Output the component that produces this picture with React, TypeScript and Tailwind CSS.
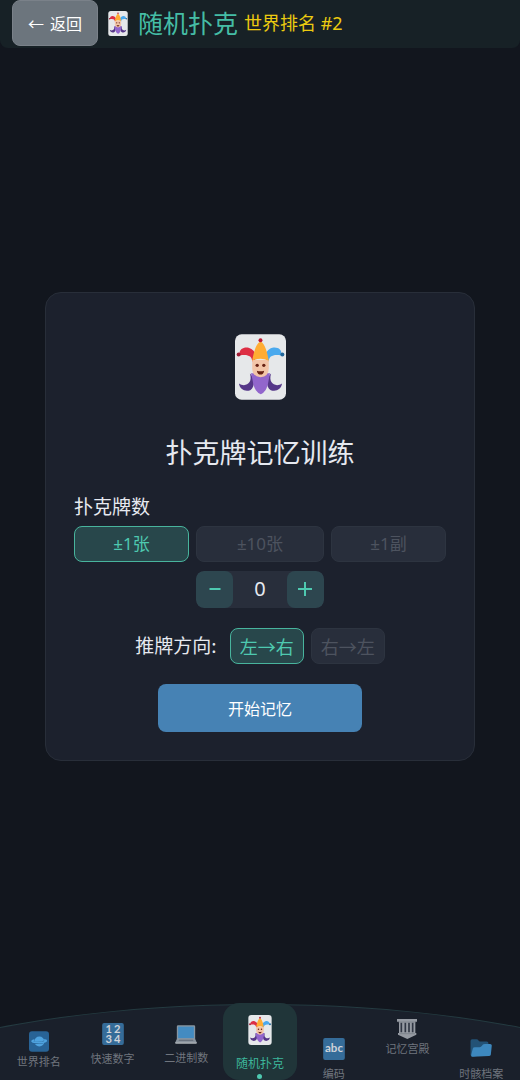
import React, { useState } from "react";

function Joker({ className }: { className: string }) {
  return (
    <svg viewBox="73 42 154 198" className={className} aria-hidden="true">
      <rect x="73" y="42" width="154" height="198" rx="20" fill="#e6e8ea" />
      <path d="M125 126C125 106 110 102 87 106C84 88 98 80 114 83C128 87 136 98 137 114Z" fill="#dd2e44" />
      <path d="M175 126C175 106 190 102 213 106C216 88 202 80 186 83C172 87 164 98 163 114Z" fill="#4aa9ee" />
      <circle cx="84" cy="103" r="6" fill="#a01c35" />
      <circle cx="216" cy="103" r="6" fill="#226699" />
      <path d="M118 161C133 172 135 203 119 211C103 217 87 208 85 191C103 203 128 192 118 161Z" fill="#553788" />
      <path d="M182 161C167 172 165 203 181 211C197 217 213 208 215 191C197 203 172 192 182 161Z" fill="#553788" />
      <path d="M121 160L179 160C174 177 174 199 165 211Q158 221 151 223Q143 221 136 211C127 199 127 177 121 160Z" fill="#9266cc" />
      <path d="M125 120H175V145Q175 170 150 172Q125 170 125 145Z" fill="#f3c5a8" />
      <path d="M125 122C129 99 136 70 150 64C164 70 171 99 175 122Q150 110 125 122Z" fill="#ffac33" />
      <circle cx="150" cy="60" r="6" fill="#be1931" />
      <circle cx="140" cy="136" r="5" fill="#662113" />
      <circle cx="160" cy="136" r="5" fill="#662113" />
      <path d="M139 152Q150 156 161 152Q159 164 150 164Q141 164 139 152Z" fill="#662113" />
    </svg>
  );
}

function Planet() {
  return (
    <svg viewBox="0 0 60 62" className="h-[21px] w-5" aria-hidden="true">
      <rect width="60" height="62" rx="9" fill="#286396" />
      <circle cx="31" cy="31" r="15" fill="#4fa3df" />
      <path d="M13 27C5 30 8 35 20 35C32 36 43 34 50 29" fill="none" stroke="#286396" strokeWidth="7" />
      <path d="M16 27C6 28 7 33 20 34C33 35 46 34 51 30C53 27 49 26 45 27" fill="none" stroke="#4fa3df" strokeWidth="5" />
    </svg>
  );
}

function Digits() {
  return (
    <svg viewBox="0 0 66 67" className="h-[22px] w-[22px]" aria-hidden="true">
      <rect width="66" height="67" rx="6" fill="#356c99" />
      <g fill="#cfd3d9" className="font-['Lato',sans-serif] text-[34px] font-bold" textAnchor="middle">
        <text x="20" y="31">1</text>
        <text x="46" y="31">2</text>
        <text x="20" y="62">3</text>
        <text x="46" y="62">4</text>
      </g>
    </svg>
  );
}

function Laptop() {
  return (
    <svg viewBox="0 0 66 58" className="h-[19px] w-[22px]" aria-hidden="true">
      <rect x="5" y="1" width="56" height="44" rx="4" fill="#8795a1" />
      <rect x="9" y="5" width="48" height="35" fill="#438bc1" />
      <path d="M5 43H61L66 54H0Z" fill="#8b949e" />
      <path d="M12 45H54L56 48H10Z" fill="#606975" />
      <path d="M0 53H66V55Q66 57 64 57H2Q0 57 0 55Z" fill="#b0b5bb" />
    </svg>
  );
}

function Abc() {
  return (
    <svg viewBox="0 0 66 67" className="h-[22px] w-[22px]" aria-hidden="true">
      <rect width="66" height="67" rx="6" fill="#356c99" />
      <text x="33" y="44" fill="#cfd3d9" className="font-['Lato',sans-serif] text-[35px] font-bold" textAnchor="middle">abc</text>
    </svg>
  );
}

function Temple() {
  return (
    <svg viewBox="0 0 60 60" className="h-5 w-5" aria-hidden="true">
      <path d="M0 0H60V8H55V42H58V47L31 60L3 47V42H6V8H0Z" fill="#969ba3" />
      <path d="M13 11V40M25 11V40M36 11V40M47 11V40" stroke="#303744" strokeWidth="5" />
      <path d="M4 9H56M7 44H54" stroke="#747a84" strokeWidth="2" />
    </svg>
  );
}

function Folder() {
  return (
    <svg viewBox="0 0 66 55" className="h-[18px] w-[22px]" aria-hidden="true">
      <path d="M1 6Q1 1 6 1H19Q23 1 26 5L29 8H50Q56 8 56 15V45L8 54Q1 54 1 48Z" fill="#235276" />
      <path d="M8 29Q9 25 14 25H29Q33 25 36 21L39 17Q41 15 45 15H61Q66 15 66 20L63 48Q62 52 57 52L7 54Q2 54 3 49Z" fill="#3d88be" />
    </svg>
  );
}

const tabs = [
  { label: "世界排名", icon: <Planet />, place: "pt-7 gap-1" },
  { label: "快速数字", icon: <Digits />, place: "pt-5 gap-2" },
  { label: "二进制数", icon: <Laptop />, place: "pt-[22px] gap-2" },
  { label: "随机扑克", icon: <Joker className="h-[30px] w-6" />, place: "pt-3 gap-3" },
  { label: "编码", icon: <Abc />, place: "pt-[35px] gap-2" },
  { label: "记忆宫殿", icon: <Temple />, place: "pt-4 gap-1" },
  { label: "时骸档案", icon: <Folder />, place: "pt-9 gap-[11px]" },
];

const selected = "border-[#48b49d] bg-[#28474b] text-[#4ec9b0]";
const idle = "border-[#2d3440] bg-[#282e3b] text-[#4d535f]";

export default function App() {
  const [unit, setUnit] = useState("±1张");
  const [direction, setDirection] = useState("左→右");
  const [count, setCount] = useState(0);
  const [active, setActive] = useState("随机扑克");
  const step = unit === "±1张" ? 1 : unit === "±10张" ? 10 : 52;

  return (
    <div className="flex min-h-screen flex-col overflow-hidden bg-[#12161e] font-['Noto_Sans_CJK_SC',sans-serif] text-[#e6e9f0]">
      <header className="flex h-12 items-start rounded-b-lg bg-[#172126] px-3">
        <button className="flex h-[46px] items-center gap-1.5 rounded-lg border border-[#7a8189] bg-[#6c757d] px-[15px] text-base text-white">
          <span>←</span>
          <span>返回</span>
        </button>
        <h1 className="ml-2.5 flex h-[46px] items-center gap-2.5 text-[25px] text-[#45bda5]">
          <Joker className="h-[25px] w-5" />
          随机扑克
        </h1>
        <span className="ml-1.5 flex h-[46px] items-center font-['Noto_Sans','Noto_Sans_CJK_SC',sans-serif] text-lg text-[#eccb10]">世界排名 #2</span>
      </header>

      <main className="flex flex-1 items-center justify-center px-[45px]">
        <section className="flex w-full max-w-[500px] flex-col items-center rounded-2xl border border-[#282e39] bg-[#1c212d] px-7 pt-[41px] pb-7">
          <Joker className="h-[66px] w-[51px]" />
          <h2 className="mt-8 text-[27px] leading-10">扑克牌记忆训练</h2>
          <fieldset className="mt-5 w-full">
            <legend className="text-[19px] leading-7">扑克牌数</legend>
            <div className="mt-1.5 grid grid-cols-[9fr_10fr_9fr] gap-x-[7px] gap-y-[9px]">
              {["±1张", "±10张", "±1副"].map((u) => (
                <button
                  key={u}
                  type="button"
                  aria-pressed={unit === u}
                  onClick={() => setUnit(u)}
                  className={`h-9 rounded-lg border font-['Noto_Sans','Noto_Sans_CJK_SC',sans-serif] text-[17px] ${unit === u ? selected : idle}`}
                >
                  {u}
                </button>
              ))}
              <div className="col-start-2 flex h-[37px] items-stretch overflow-hidden rounded-lg bg-[#282e3b]">
                <button
                  type="button"
                  aria-label="减少"
                  onClick={() => setCount(Math.max(0, count - step))}
                  className="flex w-[37px] items-center justify-center rounded-lg bg-[#2d464f] text-[#4ec9b0]"
                >
                  <svg viewBox="0 0 14 14" className="size-3.5" aria-hidden="true"><path d="M1.500 7H12.500" stroke="currentColor" strokeWidth="2" /></svg>
                </button>
                <output className="flex flex-1 items-center justify-center font-['Noto_Sans',sans-serif] text-xl">{count}</output>
                <button
                  type="button"
                  aria-label="增加"
                  onClick={() => setCount(count + step)}
                  className="flex w-[37px] items-center justify-center rounded-lg bg-[#2d464f] text-[#4ec9b0]"
                >
                  <svg viewBox="0 0 14 14" className="size-3.5" aria-hidden="true"><path d="M0 7H14M7 0V14" stroke="currentColor" strokeWidth="2" /></svg>
                </button>
              </div>
            </div>
          </fieldset>
          <div className="mt-5 flex items-center gap-[7px]">
            <span className="mr-1.5 text-[19px]">推牌方向:</span>
            {["左→右", "右→左"].map((d) => (
              <button
                key={d}
                type="button"
                aria-pressed={direction === d}
                onClick={() => setDirection(d)}
                className={`h-9 rounded-lg border px-[9px] text-lg ${direction === d ? selected : idle}`}
              >
                {d}
              </button>
            ))}
          </div>
          <button type="button" className="mt-5 h-12 w-[204px] rounded-lg bg-[#4682b4] text-base text-white">开始记忆</button>
        </section>
      </main>

      <nav className="relative h-[76px] px-0.5">
        <div className="absolute top-0 -left-1/2 h-[344px] w-[200%] rounded-[50%] border border-[#243a40] bg-[#1a202b]" />
        <div className="relative -mt-px grid h-[77px] grid-cols-7">
          {tabs.map(({ label, icon, place }) => (
            <button
              key={label}
              type="button"
              onClick={() => setActive(label)}
              className={`flex flex-col items-center ${place} ${
                active === label ? "rounded-2xl bg-[#203539] text-xs text-[#3cb59b]" : "text-[11px] text-[#70757e]"
              }`}
            >
              {icon}
              <span className="leading-[11px] whitespace-nowrap">{label}</span>
              {active === label && <span className="-mt-1.5 size-[5px] shrink-0 rounded-full bg-[#4ec9b0]" />}
            </button>
          ))}
        </div>
      </nav>
    </div>
  );
}
